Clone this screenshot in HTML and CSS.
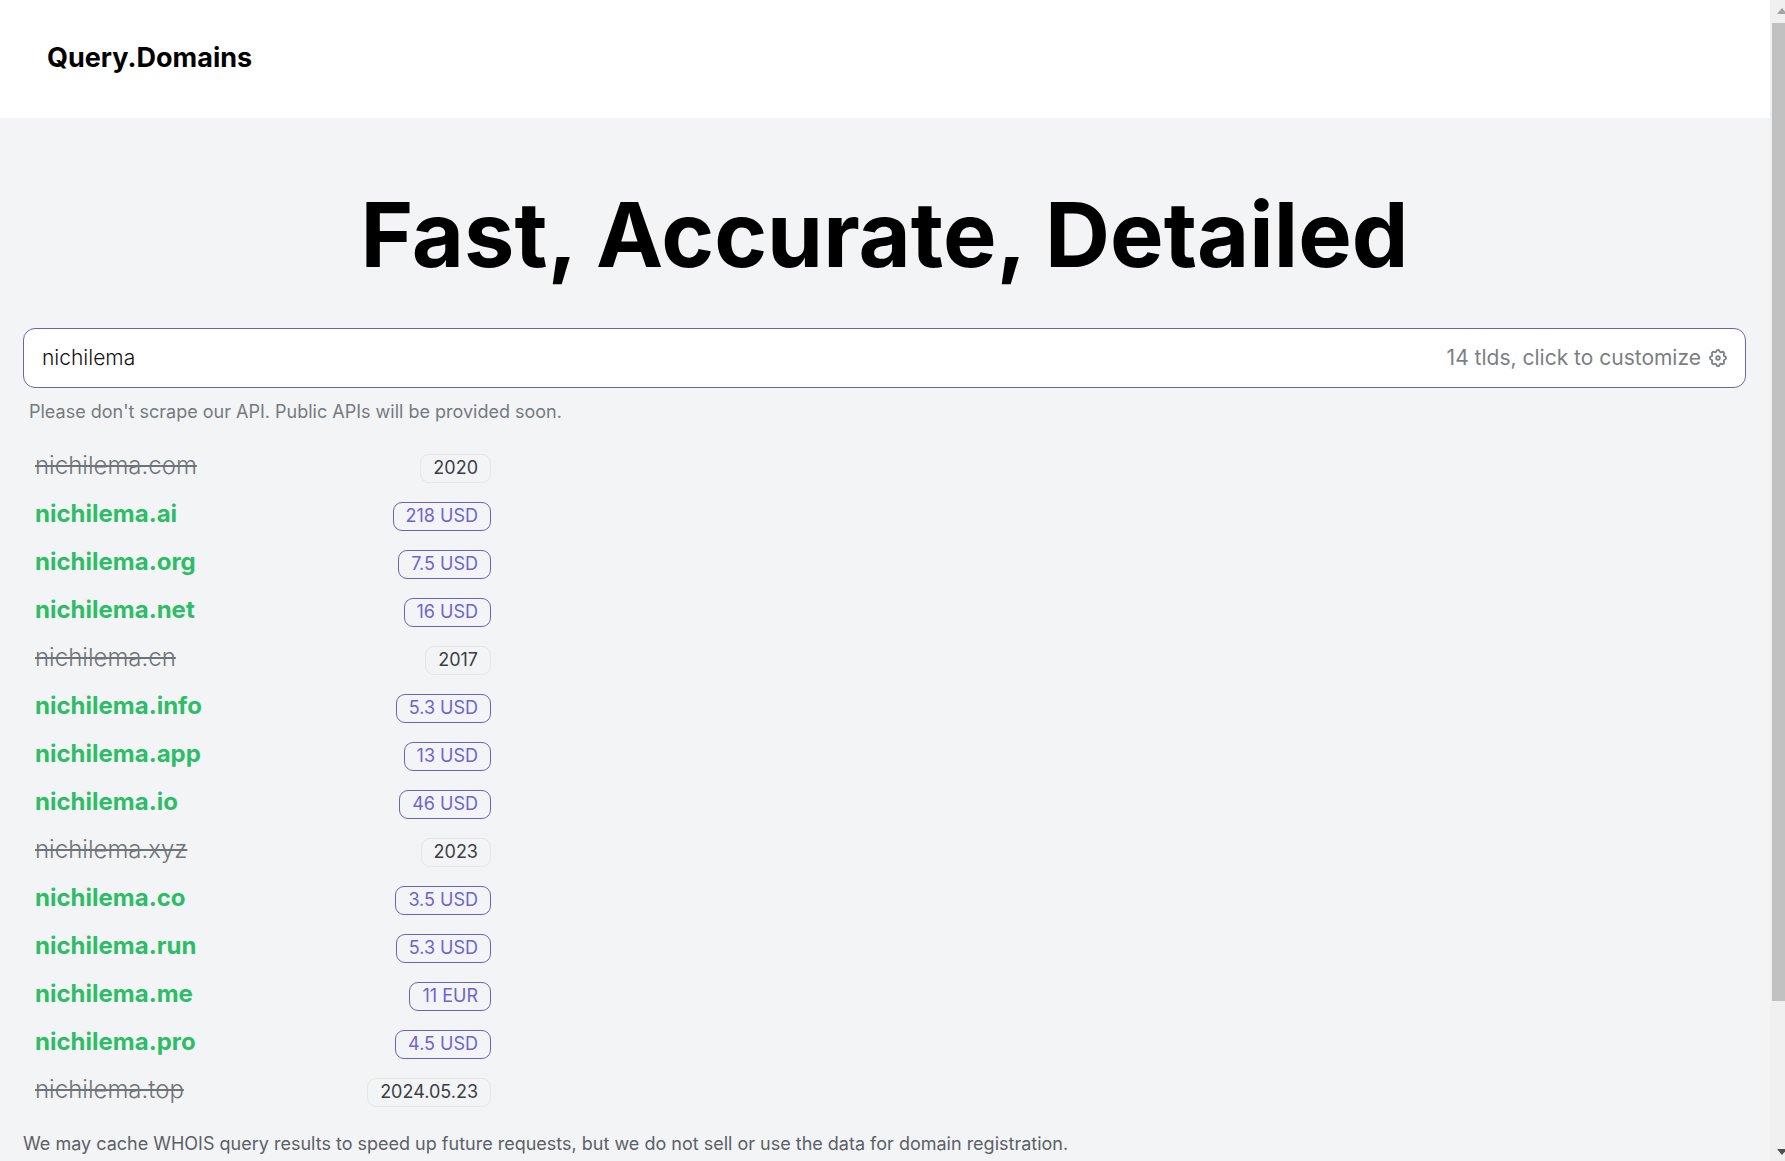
FILE: index.html
```html
<!DOCTYPE html>
<html lang="en">
<head>
    <meta charset="UTF-8">
    <meta name="viewport" content="width=device-width, initial-scale=1.0">
    <title>Query.Domains</title>
    <link rel="stylesheet" href="styles.css">
</head>
<body>
    <div class="page">
        <header class="header">
            <a class="brand" href="#">Query.Domains</a>
        </header>
        <main class="main">
            <h1 class="title">Fast, Accurate, Detailed</h1>
            <form class="search">
                <input class="search-input" type="text" aria-label="Domain name" value="nichilema">
                <button class="customize" type="button">
                    14 tlds, click to customize
                    <svg class="gear" viewBox="2 2 20 20" fill="none" stroke="currentColor" stroke-width="2" stroke-linejoin="round">
                        <path d="M10.325 4.317c.426-1.756 2.924-1.756 3.350 0a1.724 1.724 0 0 0 2.573 1.066c1.543-.940 3.310.826 2.370 2.370a1.724 1.724 0 0 0 1.065 2.572c1.756.426 1.756 2.924 0 3.350a1.724 1.724 0 0 0-1.066 2.573c.940 1.543-.826 3.310-2.370 2.370a1.724 1.724 0 0 0-2.572 1.065c-.426 1.756-2.924 1.756-3.350 0a1.724 1.724 0 0 0-2.573-1.066c-1.543.940-3.310-.826-2.370-2.370a1.724 1.724 0 0 0-1.065-2.572c-1.756-.426-1.756-2.924 0-3.350a1.724 1.724 0 0 0 1.066-2.573c-.940-1.543.826-3.310 2.370-2.370 1 .608 2.296.070 2.572-1.065z"/>
                        <circle cx="12" cy="12" r="2"/>
                    </svg>
                </button>
            </form>
            <p class="hint">Please don't scrape our API. Public APIs will be provided soon.</p>
            <ul class="domains">
                <li class="domain taken"><a href="#">nichilema.com</a><span class="badge">2020</span></li>
                <li class="domain"><a href="#">nichilema.ai</a><span class="badge">218 USD</span></li>
                <li class="domain"><a href="#">nichilema.org</a><span class="badge">7.5 USD</span></li>
                <li class="domain"><a href="#">nichilema.net</a><span class="badge">16 USD</span></li>
                <li class="domain taken"><a href="#">nichilema.cn</a><span class="badge">2017</span></li>
                <li class="domain"><a href="#">nichilema.info</a><span class="badge">5.3 USD</span></li>
                <li class="domain"><a href="#">nichilema.app</a><span class="badge">13 USD</span></li>
                <li class="domain"><a href="#">nichilema.io</a><span class="badge">46 USD</span></li>
                <li class="domain taken"><a href="#">nichilema.xyz</a><span class="badge">2023</span></li>
                <li class="domain"><a href="#">nichilema.co</a><span class="badge">3.5 USD</span></li>
                <li class="domain"><a href="#">nichilema.run</a><span class="badge">5.3 USD</span></li>
                <li class="domain"><a href="#">nichilema.me</a><span class="badge">11 EUR</span></li>
                <li class="domain"><a href="#">nichilema.pro</a><span class="badge">4.5 USD</span></li>
                <li class="domain taken"><a href="#">nichilema.top</a><span class="badge">2024.05.23</span></li>
            </ul>
            <p class="notice">We may cache WHOIS query results to speed up future requests, but we do not sell or use the data for domain registration.</p>
        </main>
    </div>
    <!-- scrollbar -->
    <div class="scrollbar" aria-hidden="true">
        <svg class="arrow" viewBox="0 0 10 6"><path d="M0 6L5 0l5 6z" fill="#a3a3a3"/></svg>
        <div class="thumb"></div>
        <div class="track"></div>
        <svg class="arrow" viewBox="0 0 10 6"><path d="M0 0h10L5 6z" fill="#505050"/></svg>
    </div>
</body>
</html>
```
FILE: styles.css
```css
* {
    box-sizing: border-box;
    margin: 0;
    padding: 0;
}
body {
    display: flex;
    height: 100vh;
    overflow: hidden;
    font-family: Inter, sans-serif;
    font-size: 18px;
    line-height: 28px;
    color: #000;
    background: #f3f4f6;
}
a {
    color: inherit;
    text-decoration: none;
}
.page {
    flex: 1;
    min-width: 0;
}
.header {
    display: flex;
    padding: 40px 47px;
    height: 118px;
    background: #fff;
}
.brand {
    font-size: 27px;
    line-height: 36px;
    font-weight: 700;
}
.main {
    padding: 72px 24px 0 23px;
}
.title {
    font-size: 90px;
    line-height: 90px;
    font-weight: 700;
    text-align: center;
}
.search {
    display: flex;
    align-items: center;
    height: 60px;
    margin-top: 48px;
    padding: 0 18px;
    border: 1px solid #6d62b8;
    border-radius: 12px;
    background: #fff;
}
.search-input {
    flex: 1;
    min-width: 0;
    border: 0;
    outline: 0;
    background: none;
    font: 300 21px/30px Inter, sans-serif;
    color: #111;
}
.customize {
    display: flex;
    align-items: center;
    gap: 8px;
    border: 0;
    background: none;
    font: 400 21px/30px Inter, sans-serif;
    color: #7b7f83;
}
.gear {
    width: 18px;
    height: 18px;
}
.hint {
    margin-top: 10px;
    padding: 0 6px;
    color: #747b80;
}
.domains {
    width: 480px;
    max-width: 100%;
    margin-top: 16px;
    list-style: none;
}
/* one line per tld, price or registration date on the right */
.domain {
    display: flex;
    align-items: center;
    justify-content: space-between;
    height: 48px;
    padding: 0 12px;
    font-size: 24px;
    font-weight: 700;
    color: #2dbd66;
}
.taken {
    font-weight: 300;
    color: #6f7478;
}
.taken a {
    text-decoration: line-through 2px;
}
.badge {
    height: 29px;
    margin-top: 4px;
    padding: 0 12px;
    border: 1px solid #6d62b8;
    border-radius: 9px;
    font-size: 18px;
    line-height: 26px;
    font-weight: 400;
    color: #6f63d2;
}
.taken .badge {
    border-color: #e5e7eb;
    color: #3b3f45;
}
.notice {
    margin-top: 16px;
    color: #5b6166;
}
.scrollbar {
    display: flex;
    flex-direction: column;
    align-items: flex-end;
    width: 15px;
    padding: 8px 0 6px;
    overflow: hidden;
    background: #f0f0f0;
}
.arrow {
    flex: none;
    width: 10px;
    height: 6px;
    margin-right: -2px;
}
.thumb {
    flex: 33;
    width: 13px;
    margin-top: 9px;
    background: #c1c1c1;
}
.track {
    flex: 5;
}
```
